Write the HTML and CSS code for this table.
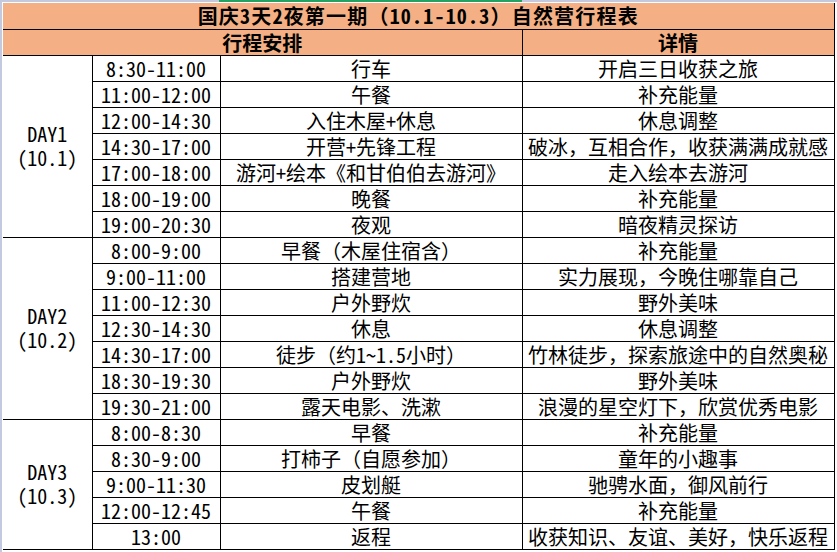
FILE: index.html
```html
<!DOCTYPE html>
<html lang="zh-CN">
<head>
<meta charset="utf-8">
<title>国庆3天2夜第一期自然营行程表</title>
<link rel="stylesheet" href="styles.css">
</head>
<body>
<div class="sheet">
  <div class="select-mark"></div>
  <table class="sched">
    <colgroup>
      <col class="c-day">
      <col class="c-time">
      <col class="c-act">
      <col class="c-info">
    </colgroup>
    <tr class="r-title"><th colspan="4" class="title">国庆<span class="hw">3</span>天<span class="hw">2</span>夜第一期（<span class="hw">10.1-10.3</span>）自然营行程表</th></tr>
    <tr class="r-head"><th colspan="3" class="first">行程安排</th><th>详情</th></tr>

    <tr><td rowspan="7" class="day first hw">DAY1<br>(10.1)</td><td class="hw">8:30-11:00</td><td>行车</td><td>开启三日收获之旅</td></tr>
    <tr><td class="hw">11:00-12:00</td><td>午餐</td><td>补充能量</td></tr>
    <tr><td class="hw">12:00-14:30</td><td>入住木屋<span class="hw">+</span>休息</td><td>休息调整</td></tr>
    <tr><td class="hw">14:30-17:00</td><td>开营<span class="hw">+</span>先锋工程</td><td>破冰，互相合作，收获满满成就感</td></tr>
    <tr><td class="hw">17:00-18:00</td><td>游河<span class="hw">+</span>绘本《和甘伯伯去游河》</td><td>走入绘本去游河</td></tr>
    <tr><td class="hw">18:00-19:00</td><td>晚餐</td><td>补充能量</td></tr>
    <tr><td class="hw">19:00-20:30</td><td>夜观</td><td>暗夜精灵探访</td></tr>

    <tr><td rowspan="7" class="day first hw">DAY2<br>(10.2)</td><td class="hw">8:00-9:00</td><td>早餐（木屋住宿含）</td><td>补充能量</td></tr>
    <tr><td class="hw">9:00-11:00</td><td>搭建营地</td><td>实力展现，今晚住哪靠自己</td></tr>
    <tr><td class="hw">11:00-12:30</td><td>户外野炊</td><td>野外美味</td></tr>
    <tr><td class="hw">12:30-14:30</td><td>休息</td><td>休息调整</td></tr>
    <tr><td class="hw">14:30-17:00</td><td>徒步（约<span class="hw">1~1.5</span>小时）</td><td>竹林徒步，探索旅途中的自然奥秘</td></tr>
    <tr><td class="hw">18:30-19:30</td><td>户外野炊</td><td>野外美味</td></tr>
    <tr><td class="hw">19:30-21:00</td><td>露天电影、洗漱</td><td>浪漫的星空灯下，欣赏优秀电影</td></tr>

    <tr><td rowspan="5" class="day first hw">DAY3<br>(10.3)</td><td class="hw">8:00-8:30</td><td>早餐</td><td>补充能量</td></tr>
    <tr><td class="hw">8:30-9:00</td><td>打柿子（自愿参加）</td><td>童年的小趣事</td></tr>
    <tr><td class="hw">9:00-11:30</td><td>皮划艇</td><td>驰骋水面，御风前行</td></tr>
    <tr><td class="hw">12:00-12:45</td><td>午餐</td><td>补充能量</td></tr>
    <tr><td class="hw">13:00</td><td>返程</td><td>收获知识、友谊、美好，快乐返程</td></tr>
  </table>
</div>
</body>
</html>
```

FILE: styles.css
```css
html, body {
  margin: 0;
  padding: 0;
  background: #ffffff;
}

.sheet {
  position: relative;
  width: 836px;
  height: 549px;
  padding: 1px 0 0 1px;
  border-top: 2px solid #c3c9de;
  border-left: 2px solid #c3c9de;
}

.select-mark {
  position: absolute;
  left: 217px;
  top: -2px;
  width: 303px;
  height: 2px;
  background: #21a366;
}

.sched {
  border-collapse: collapse;
  table-layout: fixed;
  width: 831px;
  font-family: "Noto Sans CJK SC", sans-serif;
  font-size: 20px;
  color: #000;
}

.hw {
  font-feature-settings: "hwid" 1;
}

.c-day { width: 89px; }
.c-time { width: 128px; }
.c-act { width: 302px; }
.c-info { width: 312px; }

.sched th,
.sched td {
  border: 1px solid #000;
  padding: 0;
  text-align: center;
  vertical-align: middle;
  line-height: 25px;
  white-space: nowrap;
}

.sched tr { height: 26px; }
.sched .r-head { height: 25px; }

.sched th {
  background: #f4b084;
  font-weight: bold;
}

.sched .title {
  border-top: none;
  border-left: none;
  letter-spacing: 1.2px;
}

.sched .first { border-left: none; }

.sched .day {
  line-height: 24px;
}
```
